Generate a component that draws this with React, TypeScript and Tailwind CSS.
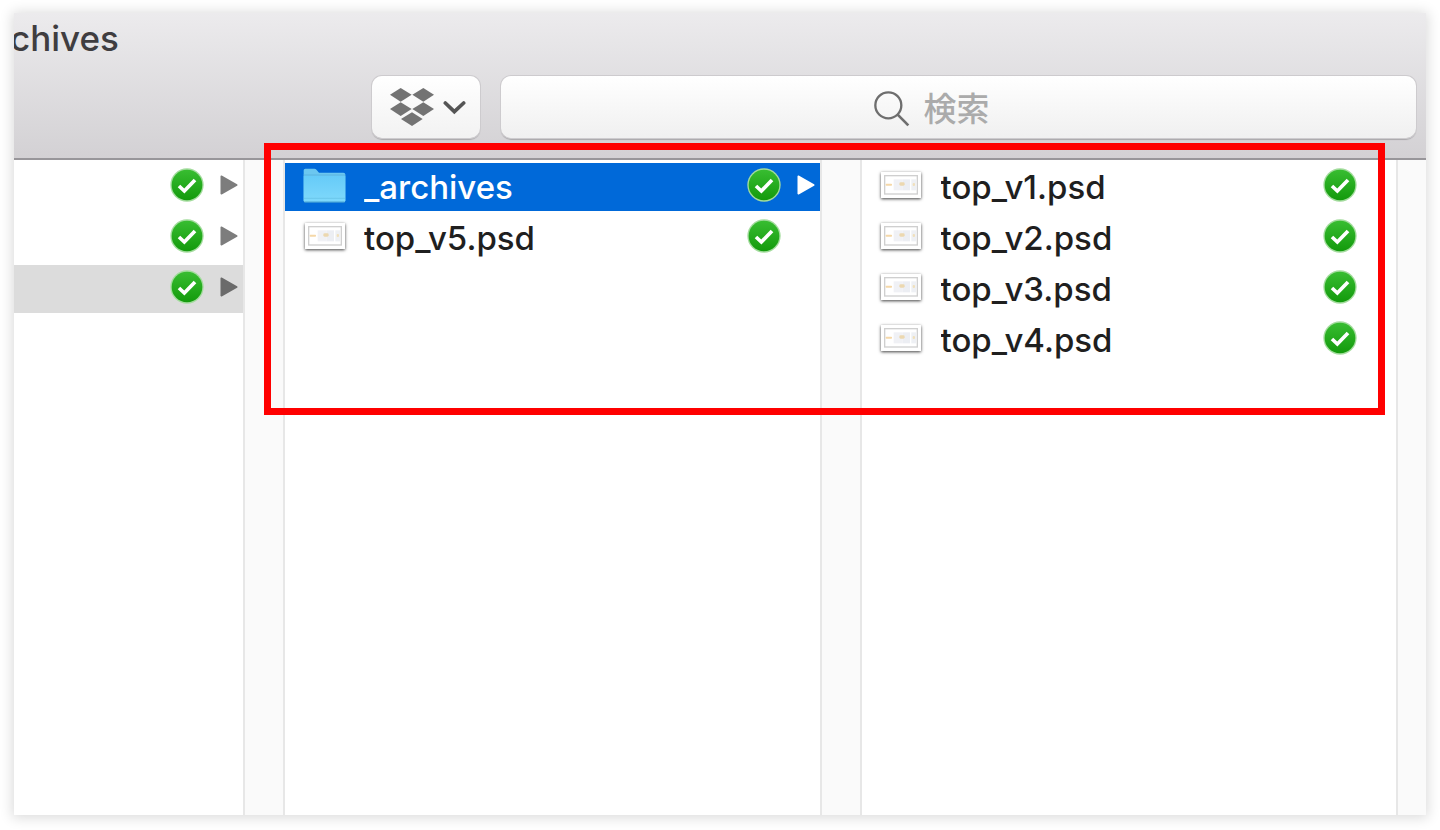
import { useState } from 'react'
import clsx from 'clsx'

type Entry = {
  name: string
  kind: 'folder' | 'psd'
}

const ENTRIES: Entry[] = [
  { name: '_archives', kind: 'folder' },
  { name: 'top_v5.psd', kind: 'psd' },
]

const ARCHIVES: Entry[] = [
  { name: 'top_v1.psd', kind: 'psd' },
  { name: 'top_v2.psd', kind: 'psd' },
  { name: 'top_v3.psd', kind: 'psd' },
  { name: 'top_v4.psd', kind: 'psd' },
]

function DropboxIcon() {
  return (
    <svg viewBox="0 0 132 114" className="h-[38px] w-11 shrink-0" fill="#737373" aria-hidden="true">
      <path d="M32 0 65 20 32 41 0 20Z" />
      <path d="M100 0 132 20 100 41 67 20Z" />
      <path d="M32 43 65 63 32 84 0 63Z" />
      <path d="M100 43 132 63 100 84 67 63Z" />
      <path d="M66 73 98 93 66 114 33 93Z" />
    </svg>
  )
}

function ChevronIcon() {
  return (
    <svg viewBox="0 0 69 45" className="h-[15px] w-[23px] shrink-0" fill="none" aria-hidden="true">
      <path d="M7 9 34 35 62 9" stroke="#555" strokeWidth="11" strokeLinecap="round" />
    </svg>
  )
}

function SearchIcon() {
  return (
    <svg viewBox="0 0 108 108" className="size-9 shrink-0" fill="none" stroke="#6e6e6e" aria-hidden="true">
      <circle cx="43" cy="43" r="39" strokeWidth="7" />
      <path d="M71 71 103 103" strokeWidth="8" />
    </svg>
  )
}

function SyncedBadge() {
  return (
    <svg viewBox="0 0 102 102" className="size-[34px] shrink-0" role="img" aria-label="同期済み">
      <defs>
        <linearGradient id="synced" x1="0" y1="0" x2="0" y2="1">
          <stop offset="0" stopColor="#38bd31" />
          <stop offset="1" stopColor="#139a0c" />
        </linearGradient>
      </defs>
      <circle cx="51" cy="51" r="50" fill="#a3dc9d" />
      <circle cx="51" cy="51" r="46" fill="url(#synced)" />
      <path d="M27 54 43 69 75 36" fill="none" stroke="#fff" strokeWidth="11" />
    </svg>
  )
}

function Arrow({ className }: { className: string }) {
  return (
    <svg viewBox="0 0 54 60" className={clsx('h-5 w-[18px] shrink-0', className)} aria-hidden="true">
      <path
        d="M4 4 50 30 4 56Z"
        fill="currentColor"
        stroke="currentColor"
        strokeWidth="5"
        strokeLinejoin="round"
      />
    </svg>
  )
}

function FolderIcon() {
  return (
    <svg viewBox="0 0 129 105" className="h-[35px] w-[43px] shrink-0" aria-hidden="true">
      <defs>
        <linearGradient id="folder" x1="0" y1="0" x2="0" y2="1">
          <stop offset="0" stopColor="#66cbf8" />
          <stop offset="1" stopColor="#7fd9fb" />
        </linearGradient>
      </defs>
      <path d="M2 7q0-5 5-5h27q4 0 7 4l7 8h73q6 0 6 6v78q0 5-5 5H7q-5 0-5-5Z" fill="#6cc7f0" />
      <path d="M2 24h125v73q0 5-5 5H7q-5 0-5-5Z" fill="url(#folder)" />
      <path d="M2 21h125" stroke="#58b5e2" strokeWidth="3" />
      <path d="M3 91h123" stroke="#62bfe4" strokeWidth="2" />
      <path d="M4 102h121" stroke="#459fd0" strokeWidth="3" />
    </svg>
  )
}

function PsdIcon() {
  return (
    <span className="flex w-[43px] shrink-0 justify-center">
      <svg
        viewBox="0 0 120 78"
        className="h-[26px] w-10 bg-white shadow-[0_1px_3px_rgba(0,0,0,0.75)]"
        aria-hidden="true"
      >
        <rect x="11" y="11" width="98" height="55" fill="#fff" stroke="#cfcfcf" strokeWidth="4" />
        <rect x="38" y="22" width="27" height="33" fill="#f0f1f5" />
        <rect x="65" y="22" width="22" height="33" fill="#eceef3" />
        <rect x="91" y="22" width="14" height="33" fill="#eef0f4" />
        <rect x="14" y="35" width="19" height="6" rx="2" fill="#f5d8a8" />
        <rect x="55" y="31" width="16" height="10" rx="4" fill="#ecd8b0" />
        <rect x="95" y="33" width="7" height="9" rx="3" fill="#f0e0bc" />
      </svg>
    </span>
  )
}

function Row(props: { entry: Entry; selected?: boolean; onSelect?: () => void }) {
  const { entry, selected, onSelect } = props
  return (
    <li>
      <button
        type="button"
        onClick={onSelect}
        className={clsx(
          'flex h-12 w-full items-center pr-[5px] pb-1 pl-[18px] text-left font-medium',
          selected ? 'bg-[#0069d9] text-white' : 'text-[#1f1f1f]',
        )}
      >
        {entry.kind === 'folder' ? <FolderIcon /> : <PsdIcon />}
        <span className="ml-[18px] min-w-0 flex-1 truncate pt-1 text-[33px] leading-[44px]">{entry.name}</span>
        <SyncedBadge />
        <span className="ml-4 flex w-[18px] shrink-0">
          {entry.kind === 'folder' && <Arrow className={selected ? 'text-white' : 'text-[#7d7d7d]'} />}
        </span>
      </button>
    </li>
  )
}

function Gutter() {
  return <div className="w-[42px] shrink-0 border-x-2 border-[#e7e7e7] bg-[#fafafa]" />
}

export default function App() {
  const [parent, setParent] = useState(2)
  const [selected, setSelected] = useState('_archives')
  const [query, setQuery] = useState('')

  return (
    <div className="flex min-h-screen bg-white px-[14px] pt-[13px] pb-[15px] font-['Inter','Noto_Sans_CJK_JP',sans-serif]">
      <div className="relative flex min-w-0 flex-1 flex-col bg-white shadow-[0_1px_12px_2px_rgba(0,0,0,0.14)]">
        <header className="border-b-2 border-[#98969a] bg-linear-to-b from-[#ecebed] to-[#d3d1d4] pb-5">
          <h1 className="h-[49px] overflow-hidden -indent-1 text-[35px] leading-[50px] font-medium text-[#3f3d40]">
            chives
          </h1>
          <div className="mt-[14px] flex h-[62px] gap-[21px] pr-[10px] pl-[358px]">
            <button
              type="button"
              aria-label="Dropbox"
              className="flex w-[108px] shrink-0 items-center justify-center gap-[9px] rounded-[10px] bg-linear-to-b from-white to-[#f2f2f2] pl-1 shadow-[0_0_0_1px_#cdcbce,0_2px_1px_#a9a7aa]"
            >
              <DropboxIcon />
              <ChevronIcon />
            </button>
            <label className="flex min-w-0 flex-1 items-center justify-center gap-[14px] rounded-[10px] bg-linear-to-b from-white to-[#f0f0f0] pt-1 shadow-[0_0_0_1px_#cdcbce,0_2px_1px_#a9a7aa]">
              <SearchIcon />
              <input
                type="text"
                aria-label="検索"
                placeholder="検索"
                value={query}
                onChange={(e) => setQuery(e.target.value)}
                className="w-[120px] bg-transparent text-[33px] leading-[48px] font-medium text-[#3b393c] outline-none placeholder:text-[#ababab]"
              />
            </label>
          </div>
        </header>

        <main className="flex flex-1">
          <ul className="flex w-[229px] shrink-0 flex-col gap-[3px] pt-[3px]">
            {[0, 1, 2].map((i) => (
              <li key={i}>
                <button
                  type="button"
                  aria-label={`フォルダ ${i + 1}`}
                  onClick={() => setParent(i)}
                  className={clsx(
                    'flex h-12 w-full items-center justify-end gap-4 pr-[5px] pb-1',
                    parent === i && 'bg-[#dcdcdc]',
                  )}
                >
                  <SyncedBadge />
                  <Arrow className={parent === i ? 'text-[#6b6b6b]' : 'text-[#7d7d7d]'} />
                </button>
              </li>
            ))}
          </ul>
          <Gutter />
          <ul className="flex min-w-0 flex-1 flex-col gap-[3px] pt-[3px]">
            {ENTRIES.map((entry) => (
              <Row
                key={entry.name}
                entry={entry}
                selected={selected === entry.name}
                onSelect={() => setSelected(entry.name)}
              />
            ))}
          </ul>
          <Gutter />
          <ul className="flex min-w-0 flex-1 flex-col gap-[3px] pt-[3px]">
            {ARCHIVES.map((entry) => (
              <Row key={entry.name} entry={entry} />
            ))}
          </ul>
          <div className="w-[30px] shrink-0 border-l-2 border-[#e7e7e7] bg-[#fafafa]" />
        </main>

        {/* callout around the two file columns */}
        <div className="pointer-events-none absolute top-[130px] right-[41px] left-[250px] h-[272px] border-[7px] border-[#ff0000]" />
      </div>
    </div>
  )
}
